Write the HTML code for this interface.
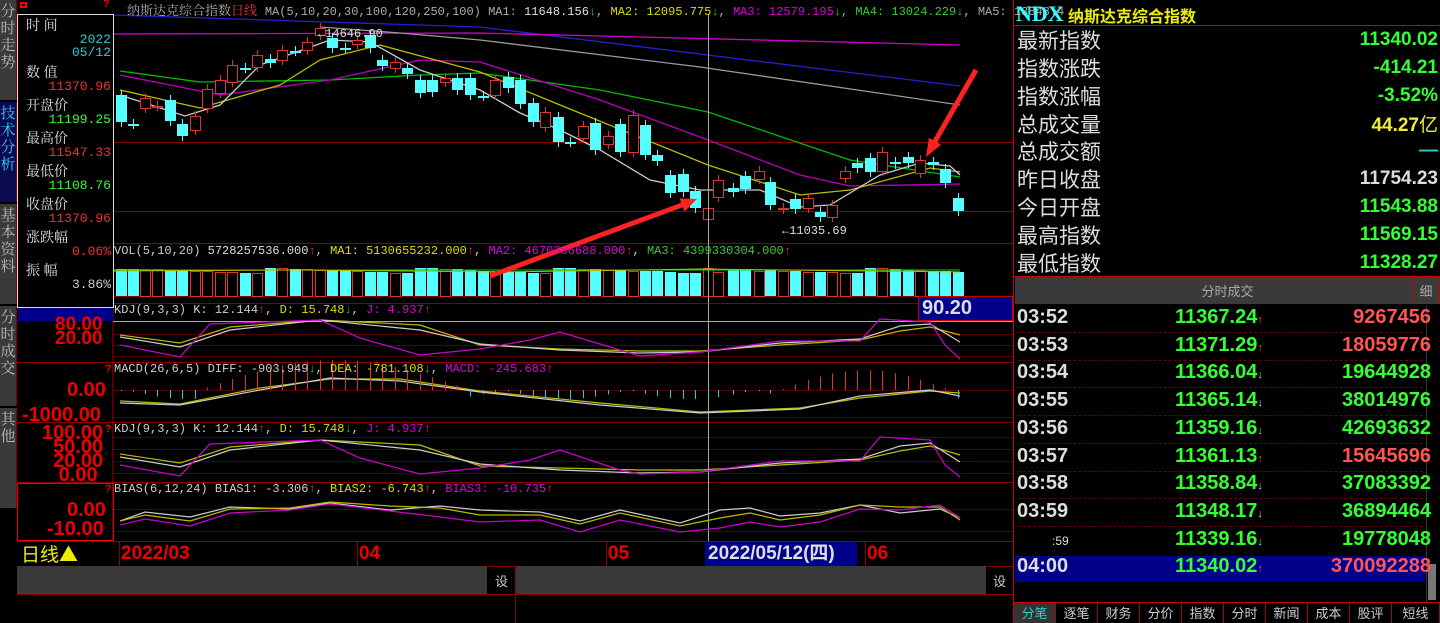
<!DOCTYPE html>
<html><head><meta charset="utf-8">
<style>
*{margin:0;padding:0;box-sizing:border-box}
body{width:1440px;height:623px;background:#000;overflow:hidden;position:relative;font-family:"Liberation Mono","Noto Serif CJK SC",monospace;}
.a{position:absolute;white-space:nowrap}
.tab{position:absolute;left:0;width:17px;background:#3a3a3a;border-right:1px solid #800;color:#bbb;font-size:15px;line-height:17px;text-align:center;font-family:"Liberation Serif","Noto Serif CJK SC",serif;padding-top:4px}
.lbl{position:absolute;left:26px;color:#ddd;font-size:14px;font-family:"Noto Serif CJK SC",serif}
.val{position:absolute;right:0;font-size:13px;text-align:right;width:94px}
.rk{position:absolute;left:1017px;color:#ddd;font-size:21px;font-family:"Noto Sans CJK SC",sans-serif;line-height:26px}
.rv{position:absolute;right:2px;font-size:19px;font-weight:bold;font-family:"Liberation Sans",sans-serif;text-align:right;line-height:26px}
.t{position:absolute;left:1017px;color:#ddd;font-size:20px;font-weight:bold;font-family:"Liberation Sans",sans-serif}
.p{position:absolute;left:1175px;color:#3f3;font-size:20px;font-weight:bold;font-family:"Liberation Sans",sans-serif}
.q{position:absolute;right:9px;font-size:20px;font-weight:bold;font-family:"Liberation Sans",sans-serif;text-align:right}
.bt{position:absolute;top:603px;height:20px;width:42px;border-right:1px solid #a00;color:#ccc;font-size:13px;text-align:center;font-family:"Noto Sans CJK SC",sans-serif;line-height:20px}
.hd{position:absolute;font-size:12px;font-family:"Liberation Mono","Noto Serif CJK SC",monospace}
</style></head><body>
<div class="tab" style="top:0;height:100px">分时走势</div>
<div class="tab" style="top:102px;height:100px;background:#0a0a50;color:#3cf">技术分析</div>
<div class="tab" style="top:204px;height:100px">基本资料</div>
<div class="tab" style="top:306px;height:100px">分时成交</div>
<div class="tab" style="top:408px;height:100px">其他</div>

<svg class="a" style="left:0;top:0" width="1013" height="623" id="ch">
<g stroke="#800" stroke-width="1">
<line x1="17" y1="243.5" x2="1013" y2="243.5"/><line x1="113" y1="142.5" x2="1013" y2="142.5"/><line x1="113" y1="211.5" x2="1013" y2="211.5"/>
<line x1="113" y1="303.5" x2="1013" y2="303.5"/><line x1="17" y1="362.5" x2="1013" y2="362.5"/><line x1="17" y1="422.5" x2="1013" y2="422.5"/><line x1="17" y1="482.5" x2="1013" y2="482.5"/>
<line x1="17" y1="541.5" x2="1013" y2="541.5"/><line x1="17" y1="566.5" x2="1013" y2="566.5"/><line x1="17" y1="594.5" x2="1013" y2="594.5"/>
<line x1="113" y1="14" x2="113" y2="541" stroke="#a00"/>
<line x1="113" y1="296.5" x2="1013" y2="296.5"/>
<line x1="113" y1="334.5" x2="1013" y2="334.5" stroke="#500"/><line x1="113" y1="345.5" x2="1013" y2="345.5" stroke="#500"/><line x1="113" y1="356.5" x2="1013" y2="356.5" stroke="#500"/>
<line x1="113" y1="390.5" x2="1013" y2="390.5" stroke="#500"/><line x1="113" y1="417.5" x2="1013" y2="417.5" stroke="#500"/>
<line x1="113" y1="437.5" x2="1013" y2="437.5" stroke="#500"/><line x1="113" y1="449.5" x2="1013" y2="449.5" stroke="#500"/><line x1="113" y1="461.5" x2="1013" y2="461.5" stroke="#500"/><line x1="113" y1="473.5" x2="1013" y2="473.5" stroke="#500"/>
<line x1="113" y1="509.5" x2="1013" y2="509.5" stroke="#500"/><line x1="113" y1="531.5" x2="1013" y2="531.5" stroke="#500"/>
<line x1="119.5" y1="541" x2="119.5" y2="566"/><line x1="357.5" y1="541" x2="357.5" y2="566"/><line x1="606.5" y1="541" x2="606.5" y2="566"/><line x1="865.5" y1="541" x2="865.5" y2="566"/>
<line x1="515.5" y1="566" x2="515.5" y2="623"/>
</g>
<rect x="17" y="566" width="470" height="28" fill="#3a3a3a"/>
<rect x="516" y="566" width="470" height="28" fill="#3a3a3a"/>
<line x1="113" y1="321.5" x2="1013" y2="321.5" stroke="#aaa"/>
<g id="lines" fill="none" stroke-width="1.3">
<polyline stroke="#22c" points="113,15 480,27 960,86"/>
<polyline stroke="#c0c" points="113,34 480,33 960,45"/>
<polyline stroke="#999" points="320,27 400,33 480,40 700,67 960,105"/>
<polyline stroke="#0b0" points="120,71 200,82 330,80 420,75 480,73 600,90 708,112 850,160 960,177"/>
<polyline stroke="#b0b" points="120,75 220,95 330,80 420,60 480,62 600,100 708,140 800,175 850,186 960,184"/>
<polyline stroke="#bb0" points="120,90 200,108 280,85 320,60 380,45 480,72 560,105 708,165 800,195 850,190 930,168 960,172"/>
<polyline stroke="#ccc" points="120,95 185,116 220,105 260,65 330,40 370,42 420,70 480,90 520,113 560,130 600,150 650,180 700,190 760,190 800,207 830,205 880,175 920,163 950,166 960,175"/>
</g>
<g id="cd"></g>
<g id="vb"></g>
<line x1="708.5" y1="14" x2="708.5" y2="541" stroke="#aa9"/>
<g fill="none" stroke-width="1.2">
<polyline stroke="#bb0" points="120,335 180,343 230,327 320,320 420,325 480,345 560,349 640,351 700,351 780,345 860,340 900,331 930,327 960,335"/>
<polyline stroke="#ccc" points="120,337 180,347 230,330 320,320 420,330 480,344 560,350 640,353 700,352 780,343 860,339 900,326 930,324 960,342"/>
<polyline stroke="#c0c" points="120,345 180,357 210,324 320,320 360,338 420,355 480,349 530,340 560,332 620,350 640,356 700,352 780,341 860,341 880,319 930,322 945,345 960,359"/>
<polyline stroke="#bb0" points="120,401 180,404 260,388 330,379 400,379 480,391 600,403 700,412 800,408 860,398 930,391 960,393"/>
<polyline stroke="#ccc" points="120,403 180,405 260,390 330,378 400,381 480,392 600,405 700,413 800,409 860,396 930,390 960,396"/>
<polyline stroke="#bb0" points="120,454 180,463 230,447 320,440 420,445 480,466 560,468 640,470 700,470 780,465 860,460 900,451 930,446 960,455"/>
<polyline stroke="#ccc" points="120,457 180,467 230,450 320,440 420,450 480,464 560,470 640,473 700,472 780,463 860,459 900,446 930,443 960,462"/>
<polyline stroke="#c0c" points="120,465 180,476 210,444 320,440 360,458 420,474 480,468 530,460 560,450 620,470 640,474 700,472 780,461 860,461 880,437 930,440 945,465 960,477"/>
<polyline stroke="#ccc" points="120,521 145,512 190,517 230,507 290,509 330,503 390,510 440,506 480,510 540,512 580,521 620,510 680,523 720,510 750,508 780,516 820,513 860,505 900,513 940,509 960,518"/>
<polyline stroke="#bb0" points="120,521 145,515 190,521 230,509 290,508 330,502 390,506 440,508 480,515 540,515 580,524 620,513 680,526 720,518 750,513 780,520 820,515 860,505 900,507 940,507 960,520"/>
<polyline stroke="#c0c" points="120,525 145,519 190,526 230,513 290,510 330,504 390,511 440,517 480,522 540,520 580,532 620,520 680,532 720,528 750,522 780,527 820,522 860,509 900,510 940,505 960,518"/>
</g>
<g id="mh"></g>
<polygon fill="#f22" points="489.1,273.7 681.1,202.7 679.6,198.4 697,199 684.4,211.6 682.9,207.3 490.9,278.3"/>
<polygon fill="#f22" points="978.2,71.25 937.2,142.5 941.1,144.8 926,157 928.9,137.8 932.8,140.1 973.8,68.75"/>
<text x="782" y="234" fill="#ddd" font-size="12" font-family="Liberation Mono">←11035.69</text>
<text x="318" y="37" fill="#ddd" font-size="12" font-family="Liberation Mono">←14646.90</text>
</svg>

<script>
(function(){
var ns="http://www.w3.org/2000/svg";
function el(p,t,a){var e=document.createElementNS(ns,t);for(var k in a)e.setAttribute(k,a[k]);document.getElementById(p).appendChild(e);}
var c=[[121,95,122,0],[133,124,124,0],[145,108,98,1],[157,106,106,1],[170,100,121,0],[182,124,136,0],[195,130,116,1],[207,108,89,1],[220,93,80,1],[232,82,65,1],[245,68,68,0],[257,67,55,1],[270,59,63,0],[282,60,50,1],[295,51,51,0],[307,50,42,1],[320,35,28,1],[332,38,48,0],[345,48,48,0],[357,44,40,1],[370,35,48,0],[382,60,66,0],[395,68,62,1],[407,68,74,0],[420,80,93,0],[432,80,92,0],[445,78,82,1],[457,78,90,0],[470,78,95,0],[483,96,96,0],[495,95,80,1],[508,77,88,0],[520,80,104,0],[533,103,122,0],[545,127,112,1],[558,117,142,0],[570,142,142,0],[583,138,126,1],[595,123,150,0],[608,144,136,1],[620,124,152,0],[633,152,115,1],[645,125,155,0],[657,155,161,0],[670,175,193,0],[683,174,192,0],[695,191,208,0],[708,219,208,1],[718,197,180,1],[733,188,192,0],[745,176,189,0],[759,179,171,1],[770,182,205,0],[783,209,208,1],[795,199,209,0],[808,208,198,1],[820,212,217,0],[832,217,205,1],[845,178,171,1],[857,163,168,0],[870,158,172,0],[882,171,152,1],[895,164,162,0],[908,163,157,0],[920,173,160,1],[933,162,165,0],[945,169,183,0],[958,198,211,0]];
c.forEach(function(d){var x=d[0],a=Math.min(d[1],d[2]),b=Math.max(d[1],d[2]),h=Math.max(b-a,1);
el("cd","line",{x1:x+0.5,y1:a-5,x2:x+0.5,y2:b+5,stroke:d[3]?"#d33":"#5ff"});
if(d[3])el("cd","rect",{x:x-4.5,y:a+0.5,width:10,height:h,fill:"#000",stroke:"#d33"});
else el("cd","rect",{x:x-5,y:a,width:11,height:h<2?2:h,fill:"#5ff"});
var vt=268+((x*7)%6);
if(d[3])el("vb","rect",{x:x-4.5,y:vt+0.5,width:10,height:296-vt,fill:"none",stroke:"#d33"});
else el("vb","rect",{x:x-5,y:vt,width:11,height:296-vt,fill:"#5ff"});
if(x>200&&x<470){el("mh","line",{x1:x+.5,y1:390,x2:x+.5,y2:390-Math.abs(Math.sin((x-200)/86))*30,stroke:"#d33"});}
else if(x>780&&x<950){el("mh","line",{x1:x+.5,y1:390,x2:x+.5,y2:390-Math.abs(Math.sin((x-780)/54))*20,stroke:"#d33"});}
else el("mh","line",{x1:x+.5,y1:390,x2:x+.5,y2:390+Math.abs(Math.sin(x/40))*9,stroke:"#3cc"});
});
el("vb","polyline",{points:"113,270 960,270",stroke:"#0c0",fill:"none"});
el("vb","polyline",{points:"113,271 300,270 500,272 700,269 960,272",stroke:"#bb0",fill:"none"});
})();
</script>

<div class="a" style="left:17px;top:14px;width:97px;height:294px;border:1px solid #ddd;background:#000"></div>
<div class="a" style="left:20px;top:2px;width:7px;height:6px;border:2px solid #f00"></div>
<div class="a" style="left:103px;top:-1px;color:#f00;font-size:11px;font-weight:bold">?</div>
<div class="lbl" style="top:15px">时 间</div>
<div class="val" style="top:32px;left:17px;color:#3cc">2022</div>
<div class="val" style="top:45px;left:17px;color:#3cc">05/12</div>
<div class="lbl" style="top:62px">数 值</div>
<div class="val" style="top:79px;left:17px;color:#e33">11370.96</div>
<div class="lbl" style="top:95px">开盘价</div>
<div class="val" style="top:112px;left:17px;color:#3f3">11199.25</div>
<div class="lbl" style="top:128px">最高价</div>
<div class="val" style="top:145px;left:17px;color:#e33">11547.33</div>
<div class="lbl" style="top:161px">最低价</div>
<div class="val" style="top:178px;left:17px;color:#3f3">11108.76</div>
<div class="lbl" style="top:194px">收盘价</div>
<div class="val" style="top:211px;left:17px;color:#e33">11370.96</div>
<div class="lbl" style="top:227px">涨跌幅</div>
<div class="val" style="top:244px;left:17px;color:#e33">0.06%</div>
<div class="lbl" style="top:260px">振 幅</div>
<div class="val" style="top:277px;left:17px;color:#ccc">3.86%</div>
<div class="a" style="left:18px;top:308px;width:95px;height:13px;background:#00008a"></div>

<div class="a" style="left:55px;top:318px;color:#e00;font-size:19px;font-weight:bold;font-family:'Liberation Sans';line-height:14px">80.00<br>20.00</div>
<div class="a" style="left:105px;top:364px;color:#e00;font-size:11px;font-weight:bold">?</div>
<div class="a" style="left:67px;top:379px;color:#e00;font-size:20px;font-weight:bold;font-family:'Liberation Sans'">0.00</div>
<div class="a" style="left:22px;top:404px;color:#e00;font-size:20px;font-weight:bold;font-family:'Liberation Sans';height:17px;overflow:hidden">-1000.00</div>
<div class="a" style="left:105px;top:424px;color:#e00;font-size:11px;font-weight:bold">?</div>
<div class="a" style="left:42px;top:426px;color:#e00;font-size:20px;font-weight:bold;font-family:'Liberation Sans';line-height:14px">100.00<br>&nbsp;&nbsp;50.00<br>&nbsp;&nbsp;20.00<br>&nbsp;&nbsp;&nbsp;0.00</div>
<div class="a" style="left:17px;top:483px;width:97px;height:58px;border:1px solid #e00"></div>
<div class="a" style="left:105px;top:484px;color:#e00;font-size:11px;font-weight:bold">?</div>
<div class="a" style="left:67px;top:499px;color:#e00;font-size:20px;font-weight:bold;font-family:'Liberation Sans'">0.00</div>
<div class="a" style="left:47px;top:518px;color:#e00;font-size:20px;font-weight:bold;font-family:'Liberation Sans'">-10.00</div>

<div class="hd a" style="left:127px;top:0;color:#aaa;font-size:13px">纳斯达克综合指数<span style="color:#e33">日线</span> <span style="font-size:12px">MA(5,10,20,30,100,120,250,100) MA1: <span style="color:#ddd">11648.156</span><span style="color:#3c3">↓</span>, <span style="color:#dd0">MA2: 12095.775</span><span style="color:#3c3">↓</span>, <span style="color:#d0d">MA3: 12579.195</span><span style="color:#3c3">↓</span>, <span style="color:#3c3">MA4: 13024.229↓</span>, MA5: 13848.4</span></div>
<div class="hd a" style="left:114px;top:244px;color:#ccc">VOL(5,10,20) <span style="color:#ddd">5728257536.000</span><span style="color:#e33">↑</span>, <span style="color:#dd0">MA1: 5130655232.000</span><span style="color:#e33">↑</span>, <span style="color:#d0d">MA2: 4670386688.000</span><span style="color:#e33">↑</span>, <span style="color:#3c3">MA3: 4399330304.000</span><span style="color:#e33">↑</span></div>
<div class="hd a" style="left:114px;top:303px;color:#ccc">KDJ(9,3,3) K: 12.144<span style="color:#e33">↑</span>, <span style="color:#dd0">D: 15.748</span><span style="color:#3c3">↓</span>, <span style="color:#d0d">J: 4.937</span><span style="color:#e33">↑</span></div>
<div class="hd a" style="left:114px;top:362px;color:#ccc">MACD(26,6,5) DIFF: -903.949<span style="color:#3c3">↓</span>, <span style="color:#dd0">DEA: -781.108</span><span style="color:#3c3">↓</span>, <span style="color:#d0d">MACD: -245.683</span><span style="color:#e33">↑</span></div>
<div class="hd a" style="left:114px;top:422px;color:#ccc">KDJ(9,3,3) K: 12.144<span style="color:#e33">↑</span>, <span style="color:#dd0">D: 15.748</span><span style="color:#3c3">↓</span>, <span style="color:#d0d">J: 4.937</span><span style="color:#e33">↑</span></div>
<div class="hd a" style="left:114px;top:482px;color:#ccc">BIAS(6,12,24) BIAS1: -3.306<span style="color:#e33">↑</span>, <span style="color:#dd0">BIAS2: -6.743</span><span style="color:#e33">↑</span>, <span style="color:#d0d">BIAS3: -10.735</span><span style="color:#e33">↑</span></div>
<div class="a" style="left:918px;top:296px;width:95px;height:25px;background:#00008a;border:1px solid #c00;color:#ddd;font-size:20px;font-weight:bold;font-family:'Liberation Sans';padding-left:3px;line-height:23px">90.20</div>

<div class="a" style="left:21px;top:541px;color:#ee0;font-size:19px;font-family:'Noto Sans CJK SC';line-height:25px">日线▲</div>
<div class="a" style="left:121px;top:541px;color:#e00;font-size:19px;font-weight:bold;font-family:'Liberation Sans';line-height:25px">2022/03</div>
<div class="a" style="left:359px;top:541px;color:#e00;font-size:19px;font-weight:bold;font-family:'Liberation Sans';line-height:25px">04</div>
<div class="a" style="left:608px;top:541px;color:#e00;font-size:19px;font-weight:bold;font-family:'Liberation Sans';line-height:25px">05</div>
<div class="a" style="left:867px;top:541px;color:#e00;font-size:19px;font-weight:bold;font-family:'Liberation Sans';line-height:25px">06</div>
<div class="a" style="left:705px;top:542px;width:152px;height:24px;background:#00008a;color:#ddd;font-size:19px;font-weight:bold;font-family:'Liberation Sans','Noto Sans CJK SC';line-height:24px;padding-left:3px">2022/05/12(四)</div>
<div class="a" style="left:488px;top:567px;width:27px;height:27px;background:#000;color:#ccc;font-size:13px;text-align:center;line-height:27px;font-family:'Noto Sans CJK SC'">设</div>
<div class="a" style="left:986px;top:567px;width:27px;height:27px;background:#000;color:#ccc;font-size:13px;text-align:center;line-height:27px;font-family:'Noto Sans CJK SC'">设</div>

<div class="a" style="left:1013px;top:0;width:1px;height:623px;background:#c00"></div>
<div class="a" style="left:1016px;top:1px;color:#3ff;font-size:22px;font-weight:bold;font-family:'Liberation Serif',serif">NDX</div>
<div class="a" style="left:1068px;top:3px;color:#ee0;font-size:16px;font-weight:bold;font-family:'Noto Sans CJK SC'">纳斯达克综合指数</div>
<div class="a" style="left:1014px;top:25px;width:426px;height:1px;background:#c00"></div>
<div class="rk" style="top:27px">最新指数</div><div class="rv" style="top:27px;color:#3f3">11340.02</div>
<div class="rk" style="top:55px">指数涨跌</div><div class="rv" style="top:55px;color:#3f3">-414.21</div>
<div class="rk" style="top:83px">指数涨幅</div><div class="rv" style="top:83px;color:#3f3">-3.52%</div>
<div class="rk" style="top:111px">总成交量</div><div class="rv" style="top:111px;color:#ee3">44.27<span style="font-weight:normal;font-family:'Noto Sans CJK SC'">亿</span></div>
<div class="rk" style="top:138px">总成交额</div><div class="rv" style="top:138px;color:#3cc">—</div>
<div class="rk" style="top:166px">昨日收盘</div><div class="rv" style="top:166px;color:#ddd">11754.23</div>
<div class="rk" style="top:194px">今日开盘</div><div class="rv" style="top:194px;color:#3f3">11543.88</div>
<div class="rk" style="top:222px">最高指数</div><div class="rv" style="top:222px;color:#3f3">11569.15</div>
<div class="rk" style="top:250px">最低指数</div><div class="rv" style="top:250px;color:#3f3">11328.27</div>
<div class="a" style="left:1014px;top:276px;width:426px;height:1px;background:#c00"></div>
<div class="a" style="left:1015px;top:277px;width:425px;height:27px;background:#3a3a3a;color:#aaa;font-size:13px;text-align:center;line-height:27px;font-family:'Noto Sans CJK SC'">分时成交</div>
<div class="a" style="left:1412px;top:277px;width:28px;height:27px;border:1px solid #c00;background:#3a3a3a;color:#aaa;font-size:13px;text-align:center;line-height:25px;font-family:'Noto Sans CJK SC'">细</div>
<div class="a" style="left:1015px;top:556px;width:410px;height:26px;background:#00008a"></div>
<div class="a" style="left:1426px;top:305px;width:12px;height:298px;background:#000;border-left:1px solid #333"></div>
<div class="a" style="left:1428px;top:564px;width:8px;height:36px;background:#777"></div>
<div id="rows"></div>
<script>
(function(){
var r=[["03:52","11367.24","↑","9267456","#f55"],["03:53","11371.29","↑","18059776","#f55"],["03:54","11366.04","↓","19644928","#3f3"],["03:55","11365.14","↓","38014976","#3f3"],["03:56","11359.16","↓","42693632","#3f3"],["03:57","11361.13","↑","15645696","#f55"],["03:58","11358.84","↓","37083392","#3f3"],["03:59","11348.17","↓","36894464","#3f3"],[":59","11339.16","↓","19778048","#3f3"],["04:00","11340.02","↑","370092288","#f55"]];
var h="";r.forEach(function(d,i){var y=306+i*27.7;
h+='<div class="t" style="top:'+y+'px;'+(d[0]==":59"?'left:1052px;font-size:12px;font-weight:normal;top:'+(y+6)+'px':'')+'">'+d[0]+'</div>';
h+='<div class="p" style="top:'+y+'px">'+d[1]+'<span style="color:'+(d[2]=="↑"?"#f55":"#ccc")+';font-size:11px">'+d[2]+'</span></div>';
h+='<div class="q" style="top:'+y+'px;color:'+d[4]+'">'+d[3]+'</div>';
if(i<8)h+='<div class="a" style="left:1018px;top:'+(y+26)+'px;width:405px;border-top:1px dashed #600"></div>';});
document.getElementById("rows").innerHTML=h;})();
</script>
<div class="a" style="left:1014px;top:602px;width:426px;height:1px;background:#c00"></div>
<div class="bt" style="left:1014px;color:#3cc;background:#333">分笔</div>
<div class="bt" style="left:1056px">逐笔</div>
<div class="bt" style="left:1098px">财务</div>
<div class="bt" style="left:1140px">分价</div>
<div class="bt" style="left:1182px">指数</div>
<div class="bt" style="left:1224px">分时</div>
<div class="bt" style="left:1266px">新闻</div>
<div class="bt" style="left:1308px">成本</div>
<div class="bt" style="left:1350px">股评</div>
<div class="bt" style="left:1392px;width:48px">短线</div>
</body></html>
